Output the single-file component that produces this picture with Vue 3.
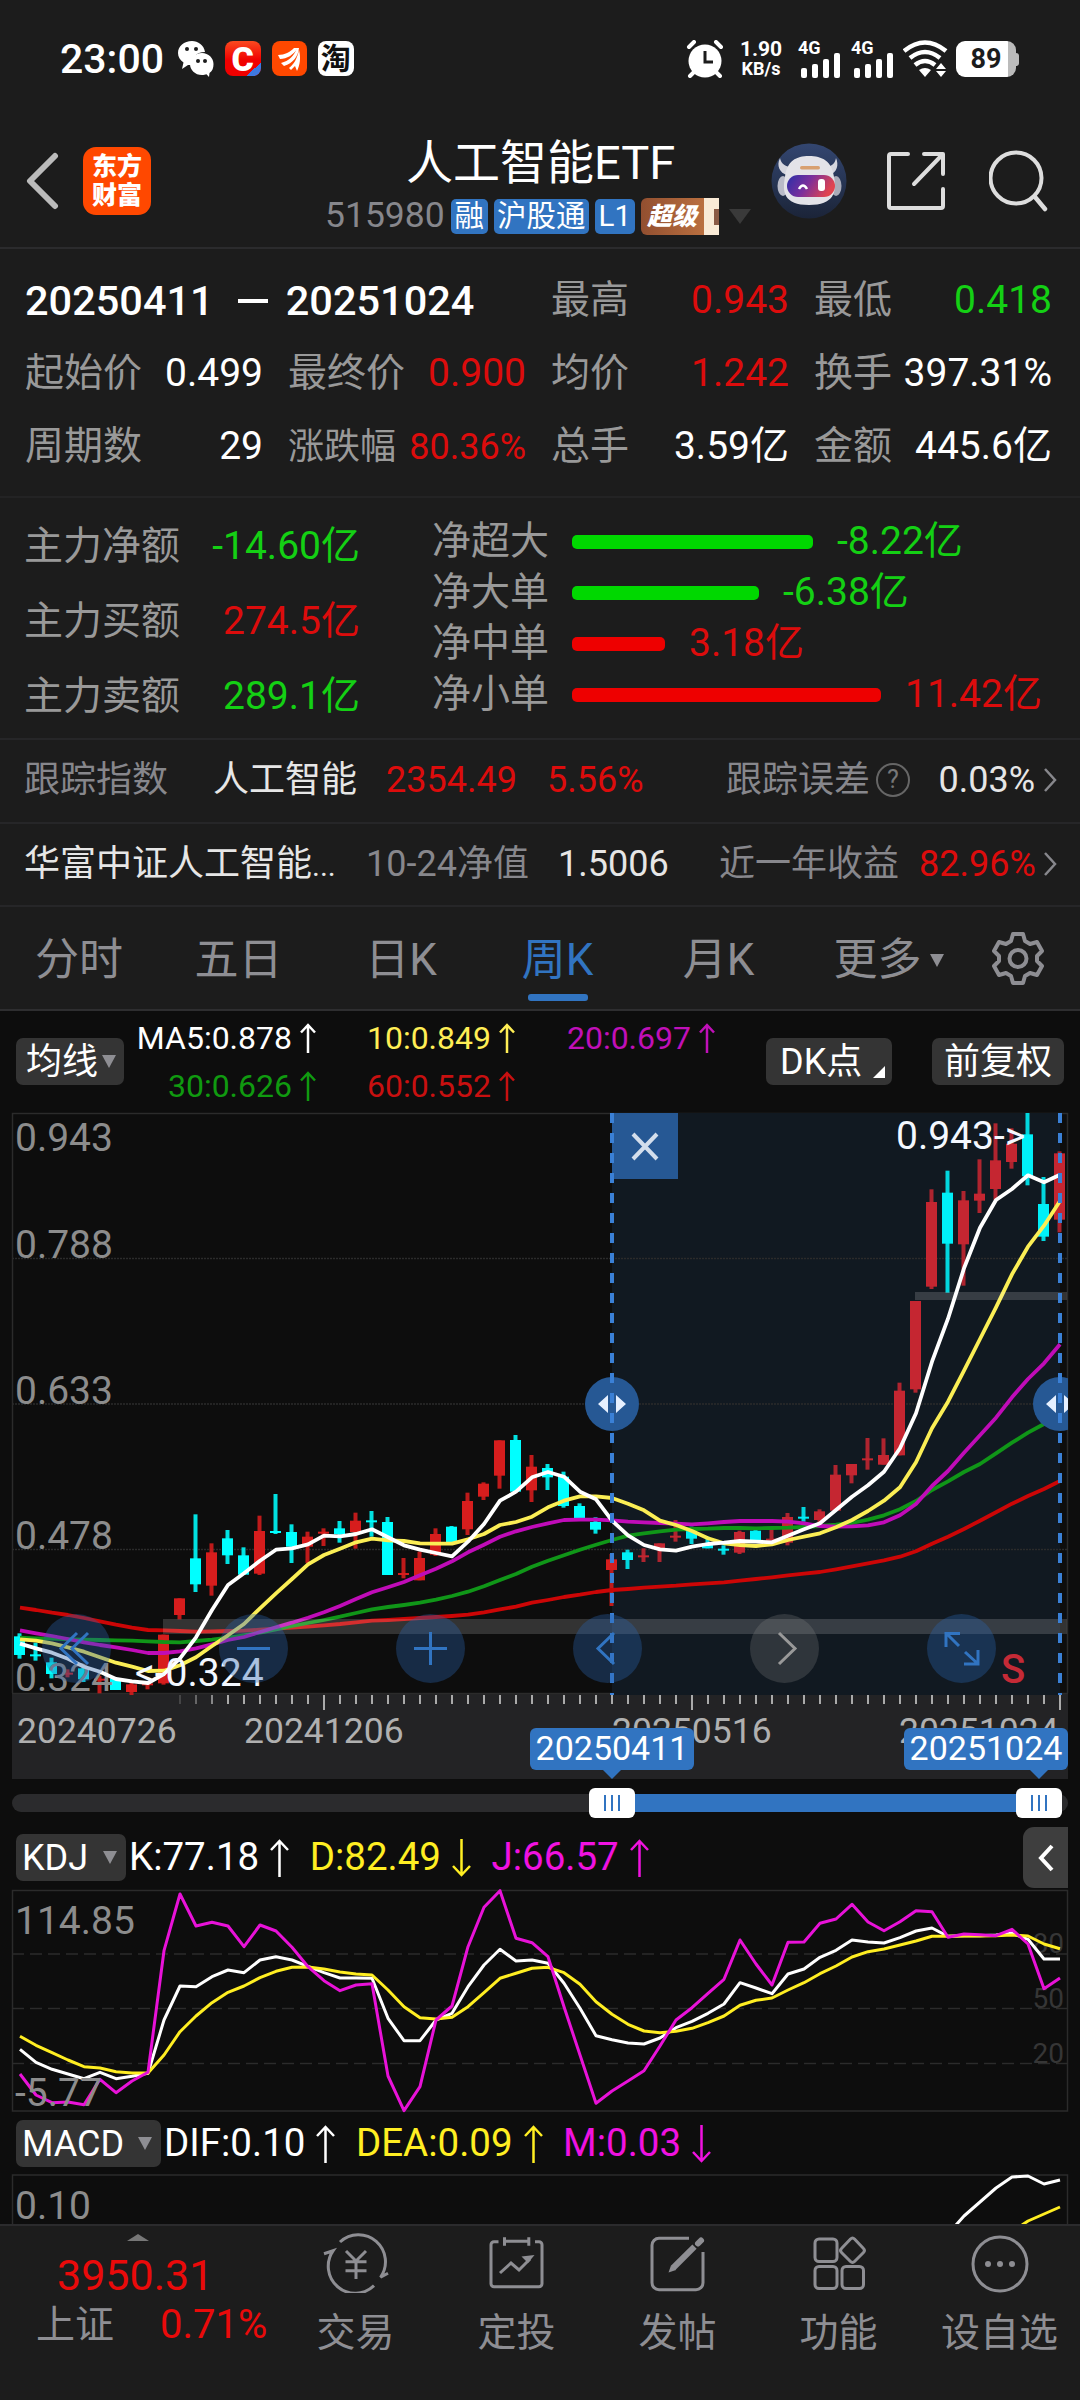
<template>
  <div class="page">
    <!-- System status bar -->
    <div class="status-bar">
      <span class="clock">23:00</span>
      <div class="app-icons">
        <svg width="36" height="36" viewBox="0 0 36 36">
          <path
            d="M14 0C6 0 0 5 0 12c0 4 2 7 5.500 9.500L4 28l6-4h5c-2-7 3-13 12-13C26 4 20 0 14 0z"
            fill="#fff"
          />
          <circle cx="9" cy="8" r="2" fill="#1c1c1c" />
          <circle cx="18" cy="8" r="2" fill="#1c1c1c" />
          <path
            d="M24 12c-7 0-12 5-12 11s5 11 12 11c2 0 3-.3 4.500-.8L31 36l.5-4c3-2 4-5 4-9 0-6-5-11-11.500-11z"
            fill="#fff"
          />
          <circle cx="20" cy="20" r="2" fill="#1c1c1c" />
          <circle cx="27" cy="20" r="2" fill="#1c1c1c" />
        </svg>
        <span class="app-icon app-c">C<i class="corner"></i></span>
        <span class="app-icon app-em">
          <svg width="36" height="36" viewBox="0 0 36 36" fill="#fff">
            <path d="M7 14C14 14 19 11 23 7h4C22 14 16 18 9 18z" />
            <path d="M10 22c8-2 13-7 16-15h2c-1 9-6 15-15 18z" />
            <path d="M18 27c5-4 8-9 10-18 2 8 1 15-2 21l-2-5-4 4z" />
          </svg>
        </span>
        <span class="app-icon app-tao">淘</span>
      </div>
      <div class="status-right">
        <svg width="38" height="38" viewBox="0 0 38 38">
          <circle cx="19" cy="21" r="16.500" fill="#fff" />
          <g stroke="#fff" stroke-width="4" stroke-linecap="round">
            <path d="M3 7l5-5M35 7l-5-5M8 32l-4 4M30 32l4 4" />
          </g>
          <path d="M19 11v11h8" fill="none" stroke="#1c1c1c" stroke-width="3" />
        </svg>
        <div class="net-speed"><span>1.90</span><span>KB/s</span></div>
        <div v-for="n in 2" :key="n" class="signal">
          <span>4G</span>
          <svg width="44" height="37" viewBox="0 0 44 37" fill="#fff">
            <rect x="4" y="27" width="6" height="10" rx="2" />
            <rect x="15" y="23" width="6" height="14" rx="2" />
            <rect x="26" y="18" width="6" height="19" rx="2" />
            <rect x="37" y="12" width="6" height="25" rx="2" />
          </svg>
        </div>
        <svg class="wifi" width="46" height="38" viewBox="0 0 46 38">
          <g fill="none" stroke="#fff" stroke-width="4.500">
            <path d="M1 11Q22-6 43 11" />
            <path d="M7 18Q22 6 37 18" />
            <path d="M12 25Q22 17 32 25" />
          </g>
          <path d="M16 30q6-4 12 0l-6 7z" fill="#fff" />
          <path d="M38 23l5 6h-10zM38 37l5-6h-10z" fill="#fff" />
        </svg>
        <div class="battery"><span>89</span></div>
      </div>
    </div>

    <!-- Title bar -->
    <header class="header">
      <svg class="back" width="34" height="58" viewBox="0 0 34 58">
        <path
          d="M29 4L4 29l25 25"
          fill="none"
          stroke="#bbb"
          stroke-width="6"
          stroke-linecap="round"
          stroke-linejoin="round"
        />
      </svg>
      <div class="brand"><span>东方</span><span>财富</span></div>
      <div class="title-block">
        <h1>人工智能ETF</h1>
        <div class="subtitle">
          <span class="code">515980</span>
          <span class="tag">融</span>
          <span class="tag">沪股通</span>
          <span class="tag">L1</span>
          <span class="vip"><b>超级</b><i></i></span>
          <i class="caret"></i>
        </div>
      </div>
      <svg class="avatar" width="76" height="76" viewBox="0 0 76 76">
        <defs>
          <linearGradient id="visor" x1="0" x2="1" y1="0" y2="0.300">
            <stop offset="0" stop-color="#2a2fa8" />
            <stop offset="0.500" stop-color="#7a2f9c" />
            <stop offset="1" stop-color="#e04450" />
          </linearGradient>
          <linearGradient id="sky" x1="0" x2="0" y1="0" y2="1">
            <stop offset="0" stop-color="#334670" />
            <stop offset="1" stop-color="#1b2438" />
          </linearGradient>
        </defs>
        <circle cx="38" cy="38" r="37.500" fill="url(#sky)" />
        <path
          d="M9 15c-4 8 0 15 7 17l5-8c-6 0-11-3-12-9zM65 15c3 7 1 14-6 17l-6-8c7 0 11-3 12-9z"
          fill="#d5d6de"
        />
        <ellipse cx="12" cy="43" rx="5.500" ry="10" fill="#b9bbc8" />
        <ellipse cx="65" cy="43" rx="5.500" ry="10" fill="#a9abb8" />
        <path
          d="M14 34C16 18 25 13 38 13s23 5 25 21c3 15 0 28-25 28S11 49 14 34z"
          fill="#e3e3e8"
        />
        <rect x="29" y="23" width="20" height="3.500" rx="1.700" fill="#d8a070" />
        <rect x="16" y="32" width="48" height="22" rx="11" fill="url(#visor)" />
        <path d="M28 46q4-7 8 0" fill="none" stroke="#fff" stroke-width="2.500" />
        <rect x="47" y="36" width="7" height="12" rx="3" fill="#fff" />
      </svg>
      <svg class="share" width="60" height="60" viewBox="0 0 60 60">
        <g
          fill="none"
          stroke="#ddd"
          stroke-width="4"
          stroke-linecap="round"
          stroke-linejoin="round"
        >
          <path d="M22 3H5a2 2 0 0 0-2 2v50a2 2 0 0 0 2 2h50a2 2 0 0 0 2-2V38" />
          <path d="M38 3h19v20M56 4L28 33" />
        </g>
      </svg>
      <svg width="60" height="62" viewBox="0 0 60 62">
        <circle cx="27" cy="28" r="25.500" fill="none" stroke="#ddd" stroke-width="4" />
        <path d="M46 47l10 12" stroke="#ddd" stroke-width="4.500" stroke-linecap="round" />
      </svg>
    </header>

    <!-- Range statistics -->
    <section class="stats">
      <div class="range">
        <span>20250411</span><i></i><span>20251024</span>
      </div>
      <div v-for="s in stats" :key="s.label" class="stat" :class="{ tight: s.tight }">
        <span class="label">{{ s.label }}</span>
        <span :class="s.tone">{{ s.value }}</span>
      </div>
    </section>

    <!-- Capital flow -->
    <section class="flows">
      <div class="flow-left">
        <div v-for="f in mainFlows" :key="f.label" class="flow-row">
          <span class="label">{{ f.label }}</span>
          <span :class="f.tone">{{ f.value }}</span>
        </div>
      </div>
      <div class="flow-right">
        <div v-for="o in orders" :key="o.label" class="order-row">
          <span class="label">{{ o.label }}</span>
          <i class="bar" :class="o.tone" :style="{ width: o.width + 'px' }"></i>
          <span :class="o.tone">{{ o.value }}</span>
        </div>
      </div>
    </section>

    <div class="info index-row">
      <span class="dim">跟踪指数</span>
      <span>人工智能</span>
      <span class="red">2354.49</span>
      <span class="red">5.56%</span>
      <span class="dim with-help">跟踪误差<i class="help">?</i></span>
      <span class="end">0.03%</span>
      <svg width="14" height="26" viewBox="0 0 14 26"><path d="M2 2l10 11L2 24" /></svg>
    </div>
    <div class="info fund-row">
      <span>华富中证人工智能<small>...</small></span>
      <span class="dim">10-24净值</span>
      <span>1.5006</span>
      <span class="dim">近一年收益</span>
      <span class="red end">82.96%</span>
      <svg width="14" height="26" viewBox="0 0 14 26"><path d="M2 2l10 11L2 24" /></svg>
    </div>

    <!-- Period tabs -->
    <nav class="tabs">
      <span v-for="t in tabs" :key="t" class="tab" :class="{ active: t === activeTab }">
        {{ t }}
      </span>
      <span class="tab more">更多<i class="caret"></i></span>
      <svg class="gear" width="54" height="54" viewBox="0 0 54 54">
        <path
          d="M22 3h10l2 7 5 3 7-2 5 9-5 5v5l5 5-5 9-7-2-5 3-2 7H22l-2-7-5-3-7 2-5-9 5-5v-5l-5-5 5-9 7 2 5-3z"
        />
        <circle cx="27" cy="27.500" r="8.500" />
      </svg>
    </nav>

    <!-- Moving averages -->
    <div class="ma-bar">
      <span class="pill ma-pill">均线<i class="caret"></i></span>
      <div class="ma-grid">
        <span v-for="m in averages" :key="m.text" :style="{ color: m.color }">
          {{ m.text
          }}<svg width="16" height="30" viewBox="0 0 16 30">
            <path d="M8 30V2M1 9.500L8 2l7 7.500" />
          </svg>
        </span>
      </div>
      <span class="pill dk">DK点<i class="corner"></i></span>
      <span class="pill fq">前复权</span>
    </div>

    <!-- Weekly candles -->
    <svg class="chart" width="1080" height="667" viewBox="0 0 1080 667">
      <defs>
        <clipPath id="plot"><rect x="12" y="0" width="1056" height="667" /></clipPath>
      </defs>
      <rect x="12" y="582" width="1056" height="85" fill="#232325" />
      <g class="grid">
        <path d="M12.500 581V1.500H1067.500V581" />
        <path d="M12 581.500H1068" />
        <path d="M12 146.500H1068M12 292H1068M12 437.500H1068" stroke-dasharray="2 1" />
      </g>
      <rect x="612" y="1" width="448" height="582" fill="#111921" />
      <path d="M612 146.500H1060M612 292H1060M612 437.500H1060" class="grid" stroke-dasharray="2 1" />

      <g v-for="(c, i) in candles" :key="i" :fill="candleColor(c, i)">
        <rect
          :x="17.500 + i * 16"
          :y="priceY(c[3])"
          width="4"
          :height="(c[4] - c[3]) / 3"
          opacity="0.880"
        />
        <rect
          :x="14 + i * 16"
          :y="priceY(c[1])"
          width="11"
          :height="Math.max(2, (c[2] - c[1]) / 3)"
        />
      </g>
      <g class="axis-price">
        <text v-for="p in priceTicks" :key="p.text" x="15" :y="p.y">{{ p.text }}</text>
      </g>
      <polyline
        v-for="l in maLines"
        :key="l.color"
        :points="toPoints(l.data, priceY)"
        :stroke="l.color"
        class="line thick"
      />
      <rect x="163" y="507" width="904" height="15" fill="#fff" opacity="0.160" />
      <rect x="915" y="180" width="152" height="8" fill="#fff" opacity="0.160" />

      <text x="896" y="37" class="mark">0.943-&gt;</text>
      <text x="135" y="574" class="mark">&lt;-0.324</text>
      <text x="1001" y="571" class="sell">S</text>

      <g clip-path="url(#plot)">
        <g v-for="x in [612, 1060]" :key="x">
          <circle :cx="x" cy="292" r="27" fill="#265894" />
          <path
            :d="`M${x - 14} 292l10-9v18zM${x + 14} 292l-10-9v18z`"
            fill="#e6f0ff"
          />
          <path :d="`M${x} 1V583`" class="cursor" />
        </g>
      </g>
      <rect x="612" y="1" width="66" height="66" fill="#265894" />
      <path d="M612 1V67" class="cursor" />
      <path d="M633 22l24 25M657 22l-24 25" stroke="#d3deec" stroke-width="4" />

      <!-- Floating chart controls -->
      <g class="controls">
        <circle
          v-for="x in [76.5, 253.5, 430.5, 607.5, 961.5]"
          :key="x"
          :cx="x"
          cy="536.500"
          r="34.500"
        />
        <circle cx="784.500" cy="536.500" r="34.500" class="muted" />
        <path d="M77 521L61 536.500L77 552M88 521L72 536.500L88 552" />
        <path d="M237 536.500H270" />
        <path d="M414 536.500H447M430.500 520V553" />
        <path d="M614 521L598 536.500L614 552" />
        <path d="M779 521L795 536.500L779 552" class="muted" />
        <path d="M946 535V521.500H960M947 522L959 534M978 538V552H964M977 551L965 540" />
      </g>

      <!-- Date axis -->
      <g fill="#aaa">
        <rect
          v-for="i in 56"
          :key="i"
          :x="163 + i * 16"
          y="583"
          width="2"
          :height="longTicks.includes(i) ? 15 : 9"
          :opacity="Math.min(1, i * 0.250)"
        />
      </g>
      <g class="dates">
        <text x="17" y="631">20240726</text>
        <text x="244" y="631">20241206</text>
        <text x="612" y="631">20250516</text>
        <text x="899" y="631">20251024</text>
      </g>
      <g fill="#3174c1">
        <rect x="530" y="616" width="164" height="42" rx="6" />
        <path d="M602 657h20l-10 10z" />
        <rect x="904" y="616" width="164" height="42" rx="6" />
        <path d="M1029 657h20l-10 10z" />
      </g>
      <g class="bubble">
        <text x="612" y="648">20250411</text>
        <text x="986" y="648">20251024</text>
      </g>
    </svg>

    <div class="slider">
      <div class="track">
        <i class="fill"></i>
        <i class="thumb from"></i>
        <i class="thumb to"></i>
      </div>
    </div>

    <!-- KDJ -->
    <div class="ind-head">
      <span class="pill kdj-pill">KDJ<i class="caret"></i></span>
      <span v-for="v in kdj" :key="v.text" class="ind" :style="{ color: v.color }">
        {{ v.text
        }}<svg width="19" height="38" viewBox="0 0 19 38">
          <path :d="v.up ? arrowUp : arrowDown" />
        </svg>
      </span>
      <span class="collapse">
        <svg width="18" height="30" viewBox="0 0 18 30"><path d="M15 3L4 15l11 12" /></svg>
      </span>
    </div>
    <svg class="chart" width="1080" height="224" viewBox="0 0 1080 224">
      <g class="grid">
        <rect x="12.500" y="1.500" width="1055" height="220.500" />
        <path d="M12 65H1068M12 119.500H1068M12 174.500H1068" stroke-dasharray="12 6" />
      </g>
      <g class="levels">
        <text x="1064" y="64">80</text>
        <text x="1064" y="119">50</text>
        <text x="1064" y="174">20</text>
      </g>
      <polyline
        v-for="l in kdjLines"
        :key="l.color"
        :points="toPoints(l.data, kdjY)"
        :stroke="l.color"
        class="line"
      />
      <g class="axis-price">
        <text x="15" y="45">114.85</text>
        <text x="15" y="217">-5.77</text>
      </g>
    </svg>

    <!-- MACD -->
    <div class="ind-head macd-head">
      <span class="pill macd-pill">MACD<i class="caret"></i></span>
      <span v-for="v in macd" :key="v.text" class="ind" :style="{ color: v.color }">
        {{ v.text
        }}<svg width="19" height="38" viewBox="0 0 19 38">
          <path :d="v.up ? arrowUp : arrowDown" />
        </svg>
      </span>
    </div>
    <svg class="chart" width="1080" height="50" viewBox="0 0 1080 50">
      <path d="M12.500 50V1H1067.500V50" class="grid" />
      <polyline
        points="956,51 964,42 980,28 996,14 1012,3 1028,2 1044,10 1060,6"
        stroke="#fff"
        class="line"
      />
      <polyline points="1022,51 1028,47 1044,40 1060,33" stroke="#ffee22" class="line" />
      <g class="axis-price"><text x="15" y="45">0.10</text></g>
    </svg>

    <!-- Bottom bar -->
    <footer class="bottom">
      <div class="index-card">
        <i class="caret up"></i>
        <b>3950.31</b>
        <div><span>上证</span><em>0.71%</em></div>
      </div>
      <div class="action">
        <svg width="66" height="60" viewBox="0 0 66 60">
          <path d="M17 9A27 27 0 0 1 57.500 44.300L65 40.300M51 52.700A27 27 0 0 1 10.200 17.700L1 20.700" />
          <path d="M23 18l10 10 10-10M33 28v18M22.500 28.700h21M22.500 37.700h21" />
        </svg>
        交易
      </div>
      <div class="action">
        <svg width="66" height="60" viewBox="0 0 66 60">
          <path
            d="M14.500 8.700H10a3 3 0 0 0-3 3v39a3 3 0 0 0 3 3h45a3 3 0 0 0 3-3v-39a3 3 0 0 0-3-3h-4"
          />
          <path d="M20.500 4.300v8.500M44.800 4.300v8.500M20.500 8.300h24M16 40l11-10 8 7 11-11" />
          <path d="M37.500 23.500l13-1.500-6.500 8z" fill="#8e8e93" stroke="none" />
        </svg>
        定投
      </div>
      <div class="action">
        <svg width="66" height="60" viewBox="0 0 66 60">
          <path d="M44 5.300H14a7 7 0 0 0-7 7v37.400a7 7 0 0 0 7 7h37a7 7 0 0 0 7-7V19" />
          <path d="M49.500 13.700L28 35" stroke-width="6" />
          <path d="M23.500 39.500l2.500-7 5 4.500z" fill="#8e8e93" stroke="none" />
          <path d="M53 10.500l3-3" stroke-width="6" stroke-linecap="round" />
        </svg>
        发帖
      </div>
      <div class="action">
        <svg width="66" height="60" viewBox="0 0 66 60">
          <rect x="9" y="6" width="22" height="22.500" rx="4" />
          <rect x="9" y="33.500" width="22" height="22" rx="4" />
          <rect x="36" y="33.500" width="21.500" height="22" rx="4" />
          <path d="M44.500 6q2-2 4 0l9 9.500q2 2 0 4l-9 9q-2 2-4 0l-9-9q-2-2 0-4z" />
        </svg>
        功能
      </div>
      <div class="action">
        <svg width="66" height="60" viewBox="0 0 66 60">
          <circle cx="33" cy="31" r="27" />
          <g fill="#8e8e93" stroke="none">
            <circle cx="21" cy="31" r="3" />
            <circle cx="33" cy="31" r="3" />
            <circle cx="45" cy="31" r="3" />
          </g>
        </svg>
        设自选
      </div>
    </footer>
  </div>
</template>

<script setup>
import { ref } from "vue";

const stats = [
  { label: "最高", value: "0.943", tone: "red" },
  { label: "最低", value: "0.418", tone: "green" },
  { label: "起始价", value: "0.499" },
  { label: "最终价", value: "0.900", tone: "red" },
  { label: "均价", value: "1.242", tone: "red" },
  { label: "换手", value: "397.31%" },
  { label: "周期数", value: "29" },
  { label: "涨跌幅", value: "80.36%", tone: "red", tight: true },
  { label: "总手", value: "3.59亿" },
  { label: "金额", value: "445.6亿" },
];

const mainFlows = [
  { label: "主力净额", value: "-14.60亿", tone: "green" },
  { label: "主力买额", value: "274.5亿", tone: "red" },
  { label: "主力卖额", value: "289.1亿", tone: "green" },
];

const orders = [
  { label: "净超大", value: "-8.22亿", tone: "green", width: 241 },
  { label: "净大单", value: "-6.38亿", tone: "green", width: 187 },
  { label: "净中单", value: "3.18亿", tone: "red", width: 93 },
  { label: "净小单", value: "11.42亿", tone: "red", width: 309 },
];

const tabs = ["分时", "五日", "日K", "周K", "月K"];
const activeTab = ref("周K");

const averages = [
  { text: "MA5:0.878", color: "#fff" },
  { text: "10:0.849", color: "#ffee55" },
  { text: "20:0.697", color: "#c010b8" },
  { text: "30:0.626", color: "#109a10" },
  { text: "60:0.552", color: "#c81010" },
];

const kdj = [
  { text: "K:77.18", color: "#fff", up: true },
  { text: "D:82.49", color: "#ffee22", up: false },
  { text: "J:66.57", color: "#f012e0", up: true },
];
const macd = [
  { text: "DIF:0.10", color: "#fff", up: true },
  { text: "DEA:0.09", color: "#ffee22", up: true },
  { text: "M:0.03", color: "#f012e0", up: false },
];
const arrowUp = "M9.500 38V2M1 11L9.500 2l8.500 9";
const arrowDown = "M9.500 0V36M1 27l8.500 9 8.500-9";

const priceTicks = [
  { text: "0.943", y: 39 },
  { text: "0.788", y: 146 },
  { text: "0.633", y: 292 },
  { text: "0.478", y: 437 },
  { text: "0.324", y: 579 },
];
const longTicks = [10, 33, 56];

// [rising, body top, body bottom, high, low], thirds of a pixel from mid-plot
const candles = [
  [0, 709, 765, 700, 776],
  [0, 763, 768, 728, 782],
  [0, 787, 822, 773, 835],
  [1, 818, 823, 808, 832],
  [0, 805, 838, 800, 846],
  [1, 836, 841, 828, 880],
  [0, 835, 870, 835, 870],
  [1, 853, 876, 848, 885],
  [1, 850, 855, 845, 868],
  [1, 704, 850, 704, 854],
  [1, 595, 645, 595, 658],
  [0, 475, 553, 343, 576],
  [1, 457, 557, 430, 587],
  [0, 415, 466, 390, 492],
  [0, 466, 524, 442, 524],
  [1, 393, 521, 347, 525],
  [0, 393, 397, 282, 402],
  [0, 396, 440, 373, 489],
  [1, 410, 440, 395, 489],
  [1, 395, 400, 385, 438],
  [0, 385, 402, 363, 428],
  [1, 362, 396, 338, 446],
  [0, 361, 366, 333, 410],
  [0, 366, 525, 351, 525],
  [1, 519, 524, 474, 535],
  [1, 474, 541, 455, 541],
  [1, 402, 464, 385, 468],
  [0, 380, 430, 378, 430],
  [1, 303, 388, 278, 405],
  [1, 251, 290, 247, 300],
  [1, 121, 227, 121, 266],
  [0, 120, 275, 105, 275],
  [1, 200, 271, 165, 306],
  [0, 204, 232, 192, 270],
  [0, 230, 318, 215, 323],
  [0, 318, 355, 310, 355],
  [0, 366, 389, 352, 401],
  [1, 478, 510, 462, 618],
  [0, 457, 480, 449, 507],
  [1, 466, 471, 445, 486],
  [1, 430, 450, 430, 486],
  [1, 407, 411, 360, 425],
  [0, 392, 416, 380, 432],
  [0, 430, 445, 410, 445],
  [0, 446, 451, 436, 464],
  [1, 396, 458, 392, 462],
  [0, 392, 425, 388, 425],
  [1, 416, 421, 390, 421],
  [1, 351, 428, 339, 436],
  [0, 350, 355, 321, 365],
  [1, 334, 360, 328, 370],
  [1, 224, 332, 195, 332],
  [1, 192, 226, 192, 250],
  [1, 175, 180, 114, 209],
  [1, 165, 194, 115, 194],
  [1, -28, 166, -52, 166],
  [1, -297, -32, -297, -22],
  [1, -594, -340, -632, -333],
  [0, -622, -469, -688, -322],
  [1, -599, -467, -627, -343],
  [1, -619, -598, -722, -561],
  [1, -719, -633, -830, -600],
  [1, -769, -714, -815, -694],
  [0, -797, -671, -861, -644],
  [0, -588, -490, -669, -477],
  [1, -740, -541, -746, -503],
];

const maLines = [
  {
    color: "#cc0606",
    data: [
      623, 630, 638, 645, 654, 664, 674, 683, 690, 691, 693, 695, 694, 693, 692, 689, 686, 683,
      680, 676, 672, 667, 662, 660, 657, 654, 651, 648, 644, 637, 628, 620, 608, 600, 591, 584,
      576, 570, 567, 563, 560, 557, 553, 550, 547, 542, 537, 532, 526, 521, 516, 508, 499, 490,
      481, 470, 454, 431, 410, 387, 362, 337, 311, 288, 267, 243,
    ],
  },
  {
    color: "#109618",
    data: [
      713, 715, 716, 718, 719, 720, 721, 722, 724, 726, 727, 723, 719, 713, 706, 698, 688, 678,
      669, 660, 650, 639, 628, 621, 615, 608, 599, 588, 575, 559, 540, 522, 500, 482, 466, 449,
      434, 420, 407, 400, 394, 389, 387, 386, 384, 384, 385, 384, 383, 381, 378, 374, 369, 359,
      346, 328, 303, 270, 244, 216, 192, 160, 128, 98, 72, 35,
    ],
  },
  {
    color: "#c00cb8",
    data: [
      691, 700, 708, 717, 727, 735, 742, 750, 759, 759, 754, 745, 733, 720, 711, 696, 682, 668,
      653, 637, 618, 597, 577, 562, 546, 526, 506, 484, 457, 434, 410, 394, 381, 370, 360, 359,
      359, 361, 365, 367, 369, 371, 373, 370, 366, 363, 363, 363, 365, 370, 378, 380, 379, 376,
      367, 346, 312, 258, 213, 158, 106, 53, -8, -63, -110, -167,
    ],
  },
  {
    color: "#fbee55",
    data: [
      718, 722, 730, 742, 755, 772, 788, 800, 813, 812, 796, 772, 738, 706, 672, 625, 580, 537,
      493, 465, 446, 427, 416, 421, 423, 430, 431, 431, 418, 402, 375, 366, 350, 322, 302, 289,
      289, 294, 311, 331, 362, 375, 393, 415, 430, 435, 438, 433, 420, 410, 400, 382, 360, 333,
      302, 262, 187, 85, 5, -88, -183, -278, -377, -460, -523, -597,
    ],
  },
  {
    color: "#fff",
    data: [
      731, 745, 758, 776, 800, 815, 837, 844, 849, 822, 775, 712, 630, 555, 520, 482, 449, 445,
      433, 407, 409, 402, 388, 412, 436, 449, 459, 469, 425, 372, 302, 275, 232, 216, 230, 275,
      298, 362, 406, 435, 448, 452, 440, 432, 428, 423, 425, 427, 407, 388, 370, 330, 290, 256,
      215, 145, 40, -115, -244, -395, -517, -600, -633, -674, -653, -676,
    ],
  },
];

const kdjLines = [
  {
    color: "#fff",
    data: [
      748, 787, 808, 822, 836, 817, 836, 829, 820, 660, 558, 560, 530, 510, 518, 480, 470, 480,
      499, 518, 534, 534, 535, 655, 722, 722, 660, 640, 560, 495, 448, 483, 480, 490, 550, 625,
      707, 719, 729, 732, 714, 683, 664, 640, 612, 548, 564, 581, 522, 507, 472, 451, 420, 426,
      429, 413, 393, 384, 409, 407, 407, 405, 400, 418, 477, 477,
    ],
  },
  {
    color: "#ffee22",
    data: [
      709, 736, 758, 780, 800, 804, 815, 819, 819, 765, 695, 648, 608, 577, 558, 533, 514, 502,
      501, 507, 516, 522, 525, 570, 620, 653, 657, 652, 620, 578, 535, 520, 505, 502, 518, 553,
      605, 643, 673, 693, 698, 694, 685, 668, 648, 616, 601, 594, 570, 548, 521, 498, 471, 455,
      447, 435, 423, 409, 409, 408, 408, 407, 405, 408, 432, 446,
    ],
  },
  {
    color: "#e812d8",
    data: [
      822, 885, 908, 906, 914, 838, 878, 843, 817, 452, 282, 378, 367, 378, 440, 375, 393, 442,
      500, 542, 572, 555, 551, 828, 932, 860, 660, 618, 440, 322, 272, 415, 428, 470, 620, 765,
      910, 873, 843, 812, 738, 660, 623, 580, 538, 420, 492, 555, 427, 426, 370, 357, 313, 366,
      392, 365, 332, 335, 412, 402, 404, 407, 388, 432, 566, 534,
    ],
  },
];

function priceY(v) {
  return 288 + v / 3;
}

function kdjY(v) {
  return v / 3 - 89;
}

function candleColor(c, i) {
  if (!c[0]) return i > 37 ? "#00f0f8" : "#00ffff";
  return i > 37 ? "#c52631" : "#d71d1d";
}

function toPoints(data, scale) {
  return data.map((v, i) => `${20 + i * 16},${scale(v).toFixed(1)}`).join(" ");
}
</script>

<style>
body {
  background: #1c1c1c;
}
</style>

<style scoped>
.page {
  width: 1080px;
  height: 2400px;
  overflow: hidden;
  background: #1c1c1c;
  color: #fff;
  font-family: Roboto, "Noto Sans CJK SC", sans-serif;
  font-size: 39px;
  line-height: 1;
  white-space: nowrap;
}
.page * {
  box-sizing: border-box;
}
svg {
  display: block;
  flex: none;
}
i,
em {
  font-style: normal;
}
.red {
  color: #dc0c0c;
}
.green {
  color: #14d014;
}
.label {
  color: #999;
}
.caret {
  display: block;
  border: 7px solid transparent;
  border-top: 13px solid #8e8e93;
  border-bottom: 0;
}

/* status bar */
.status-bar {
  height: 120px;
  padding: 0 64px 2px 60px;
  display: flex;
  align-items: center;
}
.clock {
  width: 118px;
  font-size: 41px;
  font-weight: 500;
}
.app-icons {
  display: flex;
  gap: 11px;
}
.app-icon {
  position: relative;
  width: 35.500px;
  height: 35px;
  border-radius: 8px;
  display: flex;
  align-items: center;
  justify-content: center;
}
.app-c {
  background: linear-gradient(#fb4a20, #f00000 55%);
  font-size: 34px;
  font-weight: 900;
}
.app-c .corner {
  position: absolute;
  right: 0;
  bottom: 0;
  width: 14px;
  height: 14px;
  border-radius: 0 0 8px 0;
  background: linear-gradient(135deg, transparent 50%, #3d78e0 50%);
}
.app-em {
  background: #ff4800;
}
.app-tao {
  background: #fff;
  color: #111;
  font-size: 30px;
  font-weight: 700;
}
.status-right {
  margin-left: auto;
  display: flex;
  align-items: center;
}
.net-speed {
  width: 42px;
  margin: 0 15px 0 16px;
  display: flex;
  flex-direction: column;
  align-items: center;
  font-weight: 700;
  font-size: 21px;
  line-height: 20px;
}
.net-speed span:last-child {
  font-size: 18px;
}
.signal {
  position: relative;
  margin-right: 9px;
}
.signal span {
  position: absolute;
  top: -2px;
  left: 1px;
  font-size: 18px;
  font-weight: 700;
}
.wifi {
  margin-right: 7px;
}
.battery {
  position: relative;
  width: 60px;
  height: 36px;
  border-radius: 9px;
  background: linear-gradient(90deg, #fff 52px, #bbb 52px);
  color: #1c1c1c;
  font-size: 27px;
  font-weight: 700;
  display: flex;
  align-items: center;
  justify-content: center;
}
.battery::after {
  content: "";
  position: absolute;
  right: -3px;
  top: 12px;
  width: 4px;
  height: 13px;
  border-radius: 0 3px 3px 0;
  background: #bbb;
}

/* header */
.header {
  height: 129px;
  padding: 0 28px 5px 26px;
  display: flex;
  align-items: center;
  border-bottom: 2px solid #2b2b2d;
}
.brand {
  width: 68px;
  height: 68px;
  margin-left: 23px;
  border-radius: 13px;
  background: #ff4800;
  font-size: 25px;
  font-weight: 900;
  line-height: 29px;
  display: flex;
  flex-direction: column;
  align-items: center;
  justify-content: center;
}
.title-block {
  width: 430px;
  margin-left: 175px;
  padding-top: 11px;
  display: flex;
  flex-direction: column;
  gap: 12px;
}
h1 {
  margin: 0;
  padding-left: 80px;
  font-size: 47px;
  font-weight: 400;
}
.subtitle {
  display: flex;
  align-items: center;
}
.code {
  width: 126px;
  color: #87878c;
  font-size: 35.500px;
  margin-left: -1px;
}
.tag {
  height: 35px;
  margin-right: 6px;
  padding: 0 3.500px;
  border-radius: 5px;
  background: #3174c1;
  font-size: 29.500px;
  line-height: 35px;
}
.vip {
  width: 78px;
  height: 37px;
  display: flex;
  overflow: hidden;
  border-radius: 6px 0 0 6px;
  background: linear-gradient(90deg, #924f30, #c37743);
}
.vip b {
  width: 63px;
  text-align: center;
  font-size: 25px;
  font-weight: 900;
  font-style: italic;
  line-height: 37px;
}
.vip i {
  flex: 1;
  background: linear-gradient(#8a5a45, #8a5a45) 10px 11px / 5px 16px no-repeat #f9ead6;
}
.subtitle .caret {
  margin-left: 10px;
  border-width: 15px 11px 0;
  border-top-color: #3a3a3a;
}
.avatar {
  margin-left: 15px;
}
.share {
  margin: 0 43px 0 39px;
}

/* statistics */
.stats {
  height: 249px;
  padding: 15px 28px 0 25px;
  display: grid;
  grid-template-columns: repeat(4, 238px);
  grid-auto-rows: 73px;
  column-gap: 25px;
  border-bottom: 2px solid #232324;
}
.range {
  grid-column: span 2;
  display: flex;
  align-items: center;
  font-size: 41.500px;
  font-weight: 500;
}
.range i {
  width: 30px;
  height: 4px;
  margin: 0 18px 0 24px;
  background: #fff;
}
.stat {
  display: flex;
  align-items: center;
  justify-content: space-between;
}
.tight {
  font-size: 36px;
}

/* capital flow */
.flows {
  height: 242px;
  padding-left: 24px;
  display: flex;
  border-bottom: 2px solid #262628;
}
.flow-left {
  width: 336px;
  padding-top: 11px;
}
.flow-row {
  height: 75px;
  display: flex;
  align-items: center;
  justify-content: space-between;
}
.flow-right {
  padding: 18px 0 0 72px;
}
.order-row {
  height: 51px;
  display: flex;
  align-items: center;
}
.order-row .label {
  width: 140px;
}
.bar {
  height: 14px;
  margin-right: 24px;
  border-radius: 5px;
}
.bar.green {
  background: #00d800;
}
.bar.red {
  background: #ee0000;
}

/* tracking index and fund rows */
.info {
  height: 84px;
  padding: 0 0 2px 24px;
  display: grid;
  align-items: center;
  border-bottom: 2px solid #262628;
  color: #e6e6e6;
  font-size: 36px;
}
.info .dim {
  color: #87878c;
}
.info .red {
  color: #dc0c0c;
}
.info .end {
  text-align: right;
}
.info small {
  font-size: 30px;
}
.index-row {
  grid-template-columns: 189px 173px 161px 179px 190px 119px 14px;
}
.fund-row {
  height: 83px;
  grid-template-columns: 342px 192px 161px 200px 116px 14px;
}
.info svg {
  margin-left: 8px;
  fill: none;
  stroke: #87878c;
  stroke-width: 2.500;
}
.with-help {
  display: flex;
  align-items: center;
  gap: 6px;
}
.help {
  width: 34px;
  height: 34px;
  border: 2.500px solid #666;
  border-radius: 50%;
  font-size: 25px;
  line-height: 30px;
  text-align: center;
  color: #777;
}

/* tabs */
.tabs {
  height: 104px;
  display: grid;
  grid-template-columns: 158px 161px 164px 149px 173px 167px 92px;
  border-bottom: 2px solid #2e2e30;
}
.tab {
  position: relative;
  padding-top: 4px;
  display: flex;
  align-items: center;
  justify-content: center;
  font-size: 44px;
  color: #8e8e93;
}
.tab.active {
  color: #3174c1;
}
.tab.active::after {
  content: "";
  position: absolute;
  left: 45px;
  bottom: 8px;
  width: 60px;
  height: 7px;
  border-radius: 3px;
  background: #3174c1;
}
.more {
  gap: 8px;
}
.gear {
  align-self: center;
  justify-self: center;
  fill: none;
  stroke: #8e8e93;
  stroke-width: 4;
  stroke-linejoin: round;
}

/* moving averages */
.pill {
  height: 47px;
  border-radius: 7px;
  background: #343434;
  display: flex;
  align-items: center;
  font-size: 36px;
}
.ma-bar {
  height: 101px;
  padding: 0 16px;
  display: flex;
  align-items: center;
  background: #0d0d0d;
}
.ma-pill {
  width: 108px;
  padding-left: 10px;
  gap: 4px;
}
.ma-grid {
  width: 591px;
  margin-right: 51px;
  display: grid;
  grid-template-columns: 192px 199px 200px;
  grid-auto-rows: 48px;
}
.ma-grid span {
  display: flex;
  align-items: center;
  justify-content: flex-end;
  gap: 8px;
  font-size: 32px;
}
.ma-grid svg,
.ind svg {
  fill: none;
  stroke: currentColor;
  stroke-width: 2.500;
}
.dk {
  position: relative;
  width: 126px;
  padding-left: 14px;
}
.dk .corner {
  position: absolute;
  right: 7px;
  bottom: 7px;
  border-left: 12px solid transparent;
  border-bottom: 12px solid #fff;
}
.fq {
  width: 132px;
  margin-left: 40px;
  justify-content: center;
}

/* charts */
.chart {
  background: #0d0d0d;
}
.grid {
  fill: none;
  stroke: #2b2b2b;
  stroke-width: 1.500;
}
.line {
  fill: none;
  stroke-width: 3;
  stroke-linejoin: round;
}
.thick {
  stroke-width: 3.800;
}
.axis-price {
  fill: #8c8c8c;
  font-size: 39px;
}
.mark {
  fill: #f4f8ff;
  font-size: 39px;
}
.sell {
  fill: #c52a36;
  font-size: 40px;
  font-weight: 500;
}
.cursor {
  fill: none;
  stroke: #3a80d6;
  stroke-width: 4;
  stroke-dasharray: 10 10;
}
.controls circle {
  fill: #2a62a8;
  fill-opacity: 0.360;
}
.controls circle.muted {
  fill: #888;
  fill-opacity: 0.260;
}
.controls path {
  fill: none;
  stroke: #3174c1;
  stroke-width: 3;
}
.controls path.muted {
  stroke: #999;
}
.dates {
  fill: #b0b0b0;
  font-size: 35.500px;
}
.bubble {
  fill: #fff;
  font-size: 34px;
  text-anchor: middle;
}
.levels {
  fill: #363636;
  font-size: 28px;
  text-anchor: end;
}

/* range slider */
.slider {
  height: 47px;
  padding: 15px 12px 0;
  background: #0d0d0d;
}
.track {
  position: relative;
  height: 18px;
  border-radius: 9px;
  background: #2b2b2d;
}
.fill {
  position: absolute;
  left: 600px;
  width: 427px;
  height: 18px;
  background: #3174c1;
}
.thumb {
  position: absolute;
  top: -6px;
  width: 46px;
  height: 30px;
  border-radius: 6px;
  background:
    linear-gradient(#3174c1, #3174c1) 15px 7px / 2px 16px no-repeat,
    linear-gradient(#3174c1, #3174c1) 22px 7px / 2px 16px no-repeat,
    linear-gradient(#3174c1, #3174c1) 29px 7px / 2px 16px no-repeat,
    #fff;
}
.from {
  left: 577px;
}
.to {
  left: 1004px;
}

/* indicator headings */
.ind-head {
  height: 63px;
  padding: 0 12px 0 16px;
  display: flex;
  align-items: center;
  background: #0d0d0d;
}
.macd-head {
  height: 61px;
}
.ind-head .pill {
  padding: 0 9px 0 6px;
  margin-right: 3px;
  justify-content: space-between;
}
.kdj-pill {
  width: 110px;
}
.macd-pill {
  width: 145px;
}
.ind {
  display: flex;
  align-items: center;
  gap: 11px;
  margin-right: 20.500px;
  font-size: 38.500px;
}
.collapse {
  width: 45px;
  height: 61px;
  margin-left: auto;
  border-radius: 11px 0 0 11px;
  background: #3e3e3e;
  display: flex;
  align-items: center;
  justify-content: center;
}
.collapse path {
  fill: none;
  stroke: #fff;
  stroke-width: 4;
}

/* bottom bar */
.bottom {
  height: 176px;
  display: grid;
  grid-template-columns: 275px repeat(5, 161px);
  border-top: 2px solid #2b2b2d;
  background: #1c1c1c;
  color: #8e8e93;
}
.index-card {
  padding-top: 8px;
}
.caret.up {
  width: 22px;
  margin-left: 127px;
  border-width: 0 11px 7px;
  border-bottom: 7px solid #777;
}
.index-card b {
  display: block;
  margin-top: 13px;
  padding-left: 57px;
  font-size: 43px;
  font-weight: 400;
  color: #ea0a0a;
}
.index-card div {
  margin-top: 8px;
  padding-left: 36px;
  display: flex;
  align-items: center;
}
.index-card span {
  width: 124px;
}
.index-card em {
  color: #ea0a0a;
  font-size: 40px;
}
.action {
  padding-top: 7px;
  display: flex;
  flex-direction: column;
  align-items: center;
  gap: 21px;
}
.action svg {
  fill: none;
  stroke: #8e8e93;
  stroke-width: 3;
}
</style>
